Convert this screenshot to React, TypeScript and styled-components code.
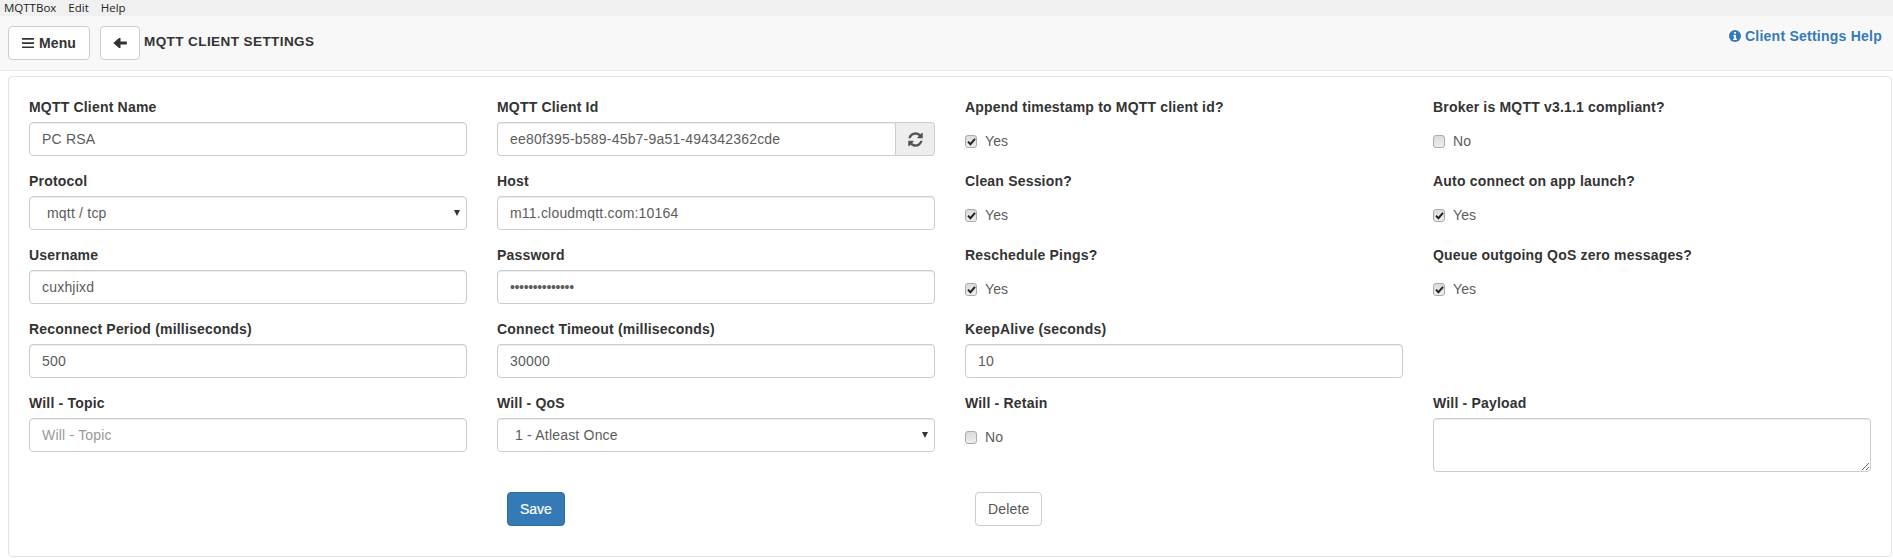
import React from 'react';
import styled, { createGlobalStyle } from 'styled-components';

const Global = createGlobalStyle`
  html, body { margin: 0; padding: 0; background: #fff; }
  body { font-family: "Liberation Sans", Arial, sans-serif; font-size: 14px; line-height: 20px; color: #333; }
  * { box-sizing: border-box; }
`;

const TitleBar = styled.div`
  height: 16px;
  background: #f0f0f0;
  display: flex;
  align-items: center;
  padding-left: 4px;
  gap: 12px;
  font-family: "Open Sans", sans-serif;
  font-size: 11.5px;
  line-height: 12px;
  color: #222;
`;

const Navbar = styled.div`
  height: 55px;
  background: #f8f8f8;
  border-bottom: 1px solid #e7e7e7;
  display: flex;
  align-items: flex-start;
  padding: 10px 11px 0 8px;
`;

const NavButton = styled.button`
  width: 82px;
  height: 34px;
  padding: 0;
  background: #fff;
  border: 1px solid #ccc;
  border-radius: 4px;
  display: inline-flex;
  align-items: center;
  justify-content: center;
  gap: 5px;
  font: bold 14px/20px "Liberation Sans", Arial, sans-serif;
  letter-spacing: 0.15px;
  color: #333;
  margin-right: 10px;
`;

const BackButton = styled(NavButton)`
  width: 40px;
  margin-right: 4px;
`;

const PageTitle = styled.div`
  font-weight: bold;
  font-size: 13.5px;
  line-height: 34px;
  letter-spacing: 0.42px;
  color: #333;
  flex: 1;
  margin-top: -1px;
`;

const HelpLink = styled.a`
  color: #337ab7;
  font-weight: bold;
  font-size: 14px;
  letter-spacing: 0.24px;
  line-height: 20px;
  display: inline-flex;
  align-items: center;
  gap: 4px;
`;

const Panel = styled.div`
  margin: 5px 1px 0 8px;
  border: 1px solid #e3e3e3;
  border-radius: 4px;
  padding: 20px 20px 29px;
  height: 481px;
`;

const Grid = styled.div`
  display: grid;
  grid-template-columns: repeat(4, 1fr);
  column-gap: 30px;
  row-gap: 15px;
`;

const Field = styled.div`
  min-width: 0;
`;

const Label = styled.label`
  display: block;
  font-weight: bold;
  font-size: 14px;
  line-height: 20px;
  letter-spacing: 0.19px;
  margin-bottom: 5px;
  color: #333;
`;

const controlCss = `
  display: block;
  width: 100%;
  height: 34px;
  padding: 6px 12px;
  font: 14px/20px "Liberation Sans", Arial, sans-serif;
  letter-spacing: 0.2px;
  color: #5c5c5c;
  background: #fff;
  border: 1px solid #ccc;
  border-radius: 4px;
  box-shadow: inset 0 1px 1px rgba(0,0,0,.075);
  outline: none;
`;

const Input = styled.input<{ $secret?: boolean }>`
  ${controlCss}
  ${p => (p.$secret ? 'letter-spacing: -0.35px;' : '')}
  &::placeholder { color: #999; opacity: 1; }
`;

const InputGroup = styled.div`
  display: flex;
  height: 34px;
`;

const GroupInput = styled(Input)`
  flex: 1;
  min-width: 0;
  border-radius: 4px 0 0 4px;
  border-right: 0;
`;

const Addon = styled.span`
  width: 40px;
  background: #eee;
  border: 1px solid #ccc;
  border-radius: 0 4px 4px 0;
  display: flex;
  align-items: center;
  justify-content: center;
  color: #555;
`;

const SelectBox = styled.div`
  position: relative;
`;

const Select = styled.select`
  ${controlCss}
  appearance: none;
  padding-left: 17px;
`;

const Caret = styled.span`
  position: absolute;
  right: 7px;
  top: 14px;
  width: 0;
  height: 0;
  border-left: 3px solid transparent;
  border-right: 3px solid transparent;
  border-top: 6px solid #333;
  pointer-events: none;
`;

const Textarea = styled.textarea`
  ${controlCss}
  height: 54px;
  resize: vertical;
`;

const CheckRow = styled.div`
  display: flex;
  align-items: center;
  height: 20px;
  margin-top: 14px;
  color: #5c5c5c;
  font-size: 14px;
  letter-spacing: 0.1px;
`;

const CheckBox = styled.span`
  width: 12px;
  height: 13px;
  margin-right: 8px;
  border: 1px solid #aaa;
  border-radius: 3px;
  background: linear-gradient(#dcdcdc, #ededed);
  display: flex;
  align-items: center;
  justify-content: center;
`;

const Empty = styled.div``;

const ActionCell = styled.div`
  padding-left: 10px;
`;

const Actions = styled(Grid)`
  margin-top: 20px;
`;

const Button = styled.button<{ $primary?: boolean }>`
  height: 34px;
  padding: 0 12px;
  font: 14px/20px "Liberation Sans", Arial, sans-serif;
  border-radius: 4px;
  border: 1px solid ${p => (p.$primary ? '#2e6da4' : '#ccc')};
  background: ${p => (p.$primary ? '#337ab7' : '#fff')};
  color: ${p => (p.$primary ? '#fff' : '#555')};
  letter-spacing: ${p => (p.$primary ? '0' : '0.15px')};
  ${p => (p.$primary ? '-webkit-text-stroke: 0.2px #fff;' : '')}
`;

const Bars = () => (
  <svg width="12" height="12" viewBox="0 0 12 12" aria-hidden="true">
    <path d="M0 1h12v1.7H0zM0 5.2h12v1.7H0zM0 9.4h12v1.7H0z" fill="#333" />
  </svg>
);

const ArrowLeft = () => (
  <svg width="14" height="14" viewBox="0 0 14 14" aria-hidden="true">
    <path d="M0.3 7 6 2h1.5v3.4H13.8v3.2H7.5V12H6z" fill="#333" />
  </svg>
);

const Refresh = () => (
  <svg width="17" height="17" viewBox="0 0 1792 1792" aria-hidden="true">
    <path
      fill="#555"
      d="M1639 1056q0 5-1 7-64 268-268 434.5t-478 166.5q-146 0-282.5-55t-243.5-157l-129 129q-19 19-45 19t-45-19-19-45v-448q0-26 19-45t45-19h448q26 0 45 19t19 45-19 45l-137 137q71 66 161 102t187 36q134 0 250-65t186-179q11-17 53-117 8-23 30-23h192q13 0 22.5 9.5t9.5 22.5zm25-800v448q0 26-19 45t-45 19h-448q-26 0-45-19t-19-45 19-45l138-138q-148-137-349-137-134 0-250 65t-186 179q-11 17-53 117-8 23-30 23h-199q-13 0-22.5-9.5t-9.5-22.5v-7q65-268 270-434.5t480-166.5q146 0 284 55.5t245 156.5l130-129q19-19 45-19t45 19 19 45z"
    />
  </svg>
);

const InfoCircle = () => (
  <svg width="12" height="12" viewBox="0 0 12 12" aria-hidden="true">
    <circle cx="6" cy="6" r="6" fill="#337ab7" />
    <rect x="5" y="2" width="2" height="1.8" fill="#f8f8f8" />
    <path d="M4.2 4.9H7v3.7h.9V10H4.2V8.6h.9V6.3h-.9z" fill="#f8f8f8" />
  </svg>
);

const Tick = () => (
  <svg width="9" height="9" viewBox="0 0 9 9" aria-hidden="true">
    <path d="M1 4.6 3.4 7.2 8 1.8" fill="none" stroke="#222" strokeWidth="1.9" />
  </svg>
);

const TextField = ({ label, value, placeholder, secret }: { label: string; value?: string; placeholder?: string; secret?: boolean }) => (
  <Field>
    <Label>{label}</Label>
    <Input type={secret ? 'password' : 'text'} $secret={secret} defaultValue={value} placeholder={placeholder} />
  </Field>
);

const SelectField = ({ label, value }: { label: string; value: string }) => (
  <Field>
    <Label>{label}</Label>
    <SelectBox>
      <Select defaultValue={value}>
        <option>{value}</option>
      </Select>
      <Caret />
    </SelectBox>
  </Field>
);

const CheckField = ({ label, checked }: { label: string; checked: boolean }) => (
  <Field>
    <Label>{label}</Label>
    <CheckRow>
      <CheckBox>{checked && <Tick />}</CheckBox>
      {checked ? 'Yes' : 'No'}
    </CheckRow>
  </Field>
);

export default function App() {
  return (
    <>
      <Global />
      <TitleBar>
        <span>MQTTBox</span>
        <span>Edit</span>
        <span>Help</span>
      </TitleBar>
      <Navbar>
        <NavButton><Bars /> Menu</NavButton>
        <BackButton aria-label="Back"><ArrowLeft /></BackButton>
        <PageTitle>MQTT CLIENT SETTINGS</PageTitle>
        <HelpLink><InfoCircle /> Client Settings Help</HelpLink>
      </Navbar>
      <Panel>
        <Grid>
          <TextField label="MQTT Client Name" value="PC RSA" />
          <Field>
            <Label>MQTT Client Id</Label>
            <InputGroup>
              <GroupInput defaultValue="ee80f395-b589-45b7-9a51-494342362cde" />
              <Addon><Refresh /></Addon>
            </InputGroup>
          </Field>
          <CheckField label="Append timestamp to MQTT client id?" checked />
          <CheckField label="Broker is MQTT v3.1.1 compliant?" checked={false} />

          <SelectField label="Protocol" value="mqtt / tcp" />
          <TextField label="Host" value="m11.cloudmqtt.com:10164" />
          <CheckField label="Clean Session?" checked />
          <CheckField label="Auto connect on app launch?" checked />

          <TextField label="Username" value="cuxhjixd" />
          <TextField label="Password" secret value="••••••••••••••" />
          <CheckField label="Reschedule Pings?" checked />
          <CheckField label="Queue outgoing QoS zero messages?" checked />

          <TextField label="Reconnect Period (milliseconds)" value="500" />
          <TextField label="Connect Timeout (milliseconds)" value="30000" />
          <TextField label="KeepAlive (seconds)" value="10" />
          <Empty />

          <TextField label="Will - Topic" placeholder="Will - Topic" />
          <SelectField label="Will - QoS" value="1 - Atleast Once" />
          <CheckField label="Will - Retain" checked={false} />
          <Field>
            <Label>Will - Payload</Label>
            <Textarea />
          </Field>
        </Grid>
        <Actions>
          <Empty />
          <ActionCell><Button $primary>Save</Button></ActionCell>
          <ActionCell><Button>Delete</Button></ActionCell>
          <Empty />
        </Actions>
      </Panel>
    </>
  );
}
